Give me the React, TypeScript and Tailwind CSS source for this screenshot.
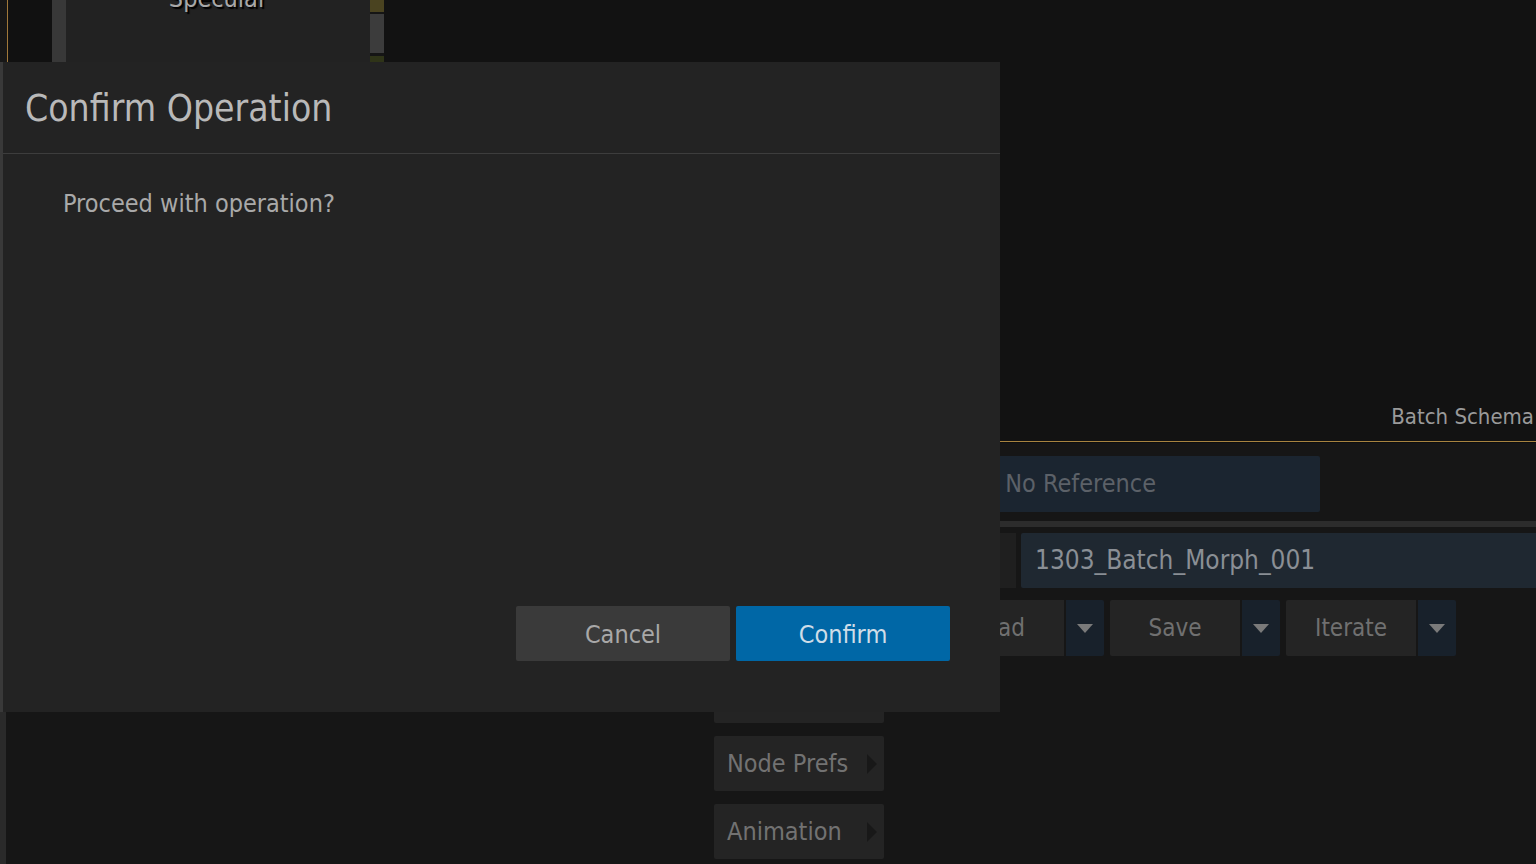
const font = { fontFamily: '"Liberation Sans Narrow", "DejaVu Sans Condensed", Roboto, sans-serif' }

function DropButton({ label }: { label: string }) {
  return (
    <div className="flex gap-[2px] h-full">
      <div className="w-[130px] h-full bg-[#242424] rounded-l-[2px] flex items-center justify-center text-[24px] text-[#707070]">
        {label}
      </div>
      <div className="w-[38px] h-full bg-[#18212b] rounded-r-[2px] flex items-center justify-center">
        <svg width="16" height="9" viewBox="0 0 16 9">
          <polygon points="0,0 16,0 8,9" fill="#7a7a7a" />
        </svg>
      </div>
    </div>
  )
}

function NodeButton({ label }: { label: string }) {
  return (
    <div className="w-[170px] h-[55px] bg-[#242424] rounded-[2px] flex items-center justify-between pl-[13px] pr-[7px] text-[25px] text-[#727272]">
      <span>{label}</span>
      <svg width="10" height="20" viewBox="0 0 10 20">
        <polygon points="0,0 10,10 0,20" fill="#181818" />
      </svg>
    </div>
  )
}

export default function App() {
  return (
    <div className="relative w-[1536px] h-[864px] overflow-hidden bg-[#151515]" style={font}>
      {/* top strip: node list fragment */}
      <div className="flex h-[62px]">
        <div className="w-[7px] bg-[#171717]" />
        <div className="w-px bg-[#a0783a]" />
        <div className="w-[44px] bg-[#111111]" />
        <div className="w-[14px] bg-[#383838]" />
        <div className="w-[304px] bg-[#222222] flex flex-col items-center overflow-hidden">
          <span className="-mt-[20px] text-[25px] text-[#a8a8a8] [text-shadow:2px_2px_1px_#000]">Specular</span>
        </div>
        <div className="w-[14px] flex flex-col">
          <div className="h-[12px] bg-[#4a4320]" />
          <div className="h-[2px] bg-[#151515]" />
          <div className="h-[39px] bg-[#3c3c3c]" />
          <div className="h-[3px] bg-[#151515]" />
          <div className="flex-1 bg-[#2f3418]" />
        </div>
        <div className="flex-1 bg-[#121212]" />
      </div>

      {/* middle area */}
      <div className="h-[379px] bg-[#121212] flex items-end justify-end">
        <span className="mb-[8px] mr-[2px] text-[22px] text-[#9a9a9a] whitespace-nowrap">Batch Schema</span>
      </div>
      <div className="h-px bg-[#a88440]" />
      <div className="h-px bg-[#0e0e0e]" />

      {/* lower area */}
      <div className="flex h-[422px] bg-[#161616]">
        <div className="w-[6px] bg-[#2a2a2a]" />
        <div className="w-[708px]" />
        <div className="flex-1 flex flex-col">
          <div className="mt-[13px] w-[606px] h-[56px] bg-[#1b2530] rounded-[2px] flex items-center justify-end pr-[164px] text-[25px] text-[#5c6168]">
            No Reference
          </div>
          <div className="mt-[9px] h-[6px] bg-[#2c2c2c]" />
          <div className="mt-[6px] h-[55px] flex gap-[5px]">
            <div className="w-[302px] bg-[#1f1f1f]" />
            <div className="flex-1 bg-[#1f2831] rounded-l-[2px] flex items-center pl-[14px] text-[26px] text-[#8a8f95]">
              1303_Batch_Morph_001
            </div>
          </div>
          <div className="mt-[12px] h-[56px] flex gap-[6px] pl-[220px]">
            <DropButton label="Load" />
            <DropButton label="Save" />
            <DropButton label="Iterate" />
          </div>
          <div className="mt-[12px] flex flex-col gap-[13px]">
            <NodeButton label="Preferences" />
            <NodeButton label="Node Prefs" />
            <NodeButton label="Animation" />
          </div>
        </div>
      </div>

      {/* dialog overlay */}
      <div className="absolute left-0 top-[62px] w-[1000px] h-[650px] bg-[#232323] border-l-[3px] border-[#393939] flex flex-col">
        <div className="h-[92px] shrink-0 border-b border-[#3d3d3d] flex items-center pl-[22px] pt-[2px] text-[37px] text-[#b9b9b9]">
          Confirm Operation
        </div>
        <div className="flex-1 flex flex-col pl-[60px] pr-[50px] pb-[51px]">
          <p className="mt-[31px] text-[25px] text-[#a9a9a9]">Proceed with operation?</p>
          <div className="mt-auto flex justify-end gap-[6px]">
            <button className="w-[214px] h-[55px] bg-[#3a3a3a] rounded-[2px] text-[25px] text-[#a8a8a8] pt-[2px]">Cancel</button>
            <button className="w-[214px] h-[55px] bg-[#0067a6] rounded-[2px] text-[25px] text-[#cfdde8] pt-[2px]">Confirm</button>
          </div>
        </div>
      </div>
    </div>
  )
}
